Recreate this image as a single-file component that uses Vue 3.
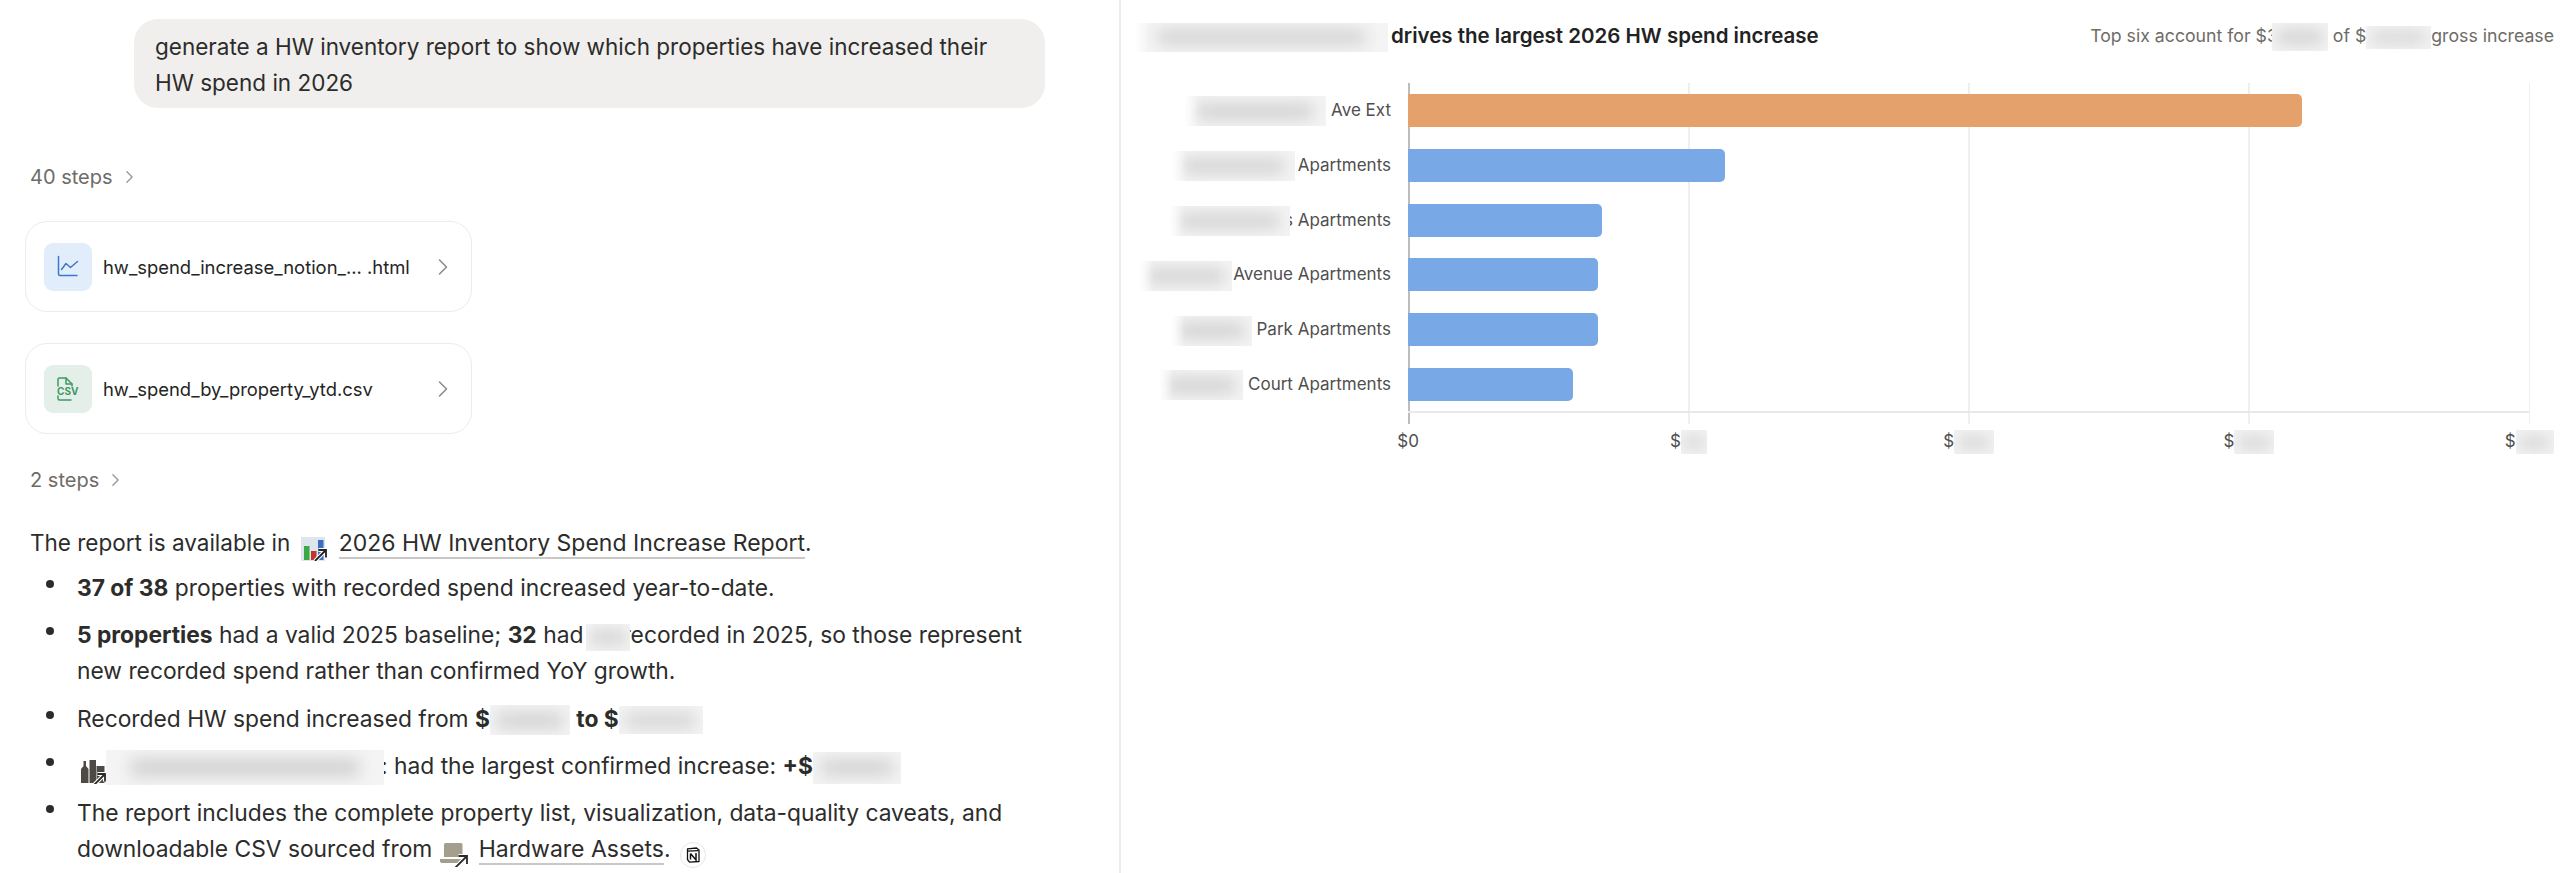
<script setup>
import { computed } from 'vue'

const maxValue = 1121

const rows = [
  { blur: 142, text: 'Ave Ext', gap: 5, bar: 894, color: '#e5a16b' },
  { blur: 123, text: 'Apartments', gap: 3, bar: 317, color: '#78a8e5' },
  { blur: 121, text: 's Apartments', gap: -6, bar: 194, color: '#78a8e5' },
  { blur: 93, text: 'Avenue Apartments', gap: 1, bar: 190, color: '#78a8e5' },
  { blur: 81, text: 'Park Apartments', gap: 5, bar: 190, color: '#78a8e5' },
  { blur: 84, text: 'Court Apartments', gap: 5, bar: 165, color: '#78a8e5' }
]

const gridLines = [0, 1, 2, 3, 4]
const barRows = computed(() => rows.map((r) => ({ ...r, pct: (r.bar / maxValue) * 100 + '%' })))
const tickBlurs = [0, 26, 40, 40, 38]
</script>

<template>
  <div class="page">
    <section class="chat">
      <div class="bubble">generate a HW inventory report to show which properties have increased their HW spend in 2026</div>

      <div class="steps first">
        40 steps
        <svg class="steps-chev" viewBox="0 0 10 16"><path d="M2 2l6 6-6 6" /></svg>
      </div>

      <div class="file first-file">
        <span class="file-icon blue">
          <svg viewBox="0 0 24 24" width="24" height="24" fill="none" stroke="#3f78c9" stroke-width="1.5" stroke-linecap="round" stroke-linejoin="round">
            <path d="M2.5 1.5V19q0 1.5 1.5 1.5h17" />
            <path d="M5.5 14.5L10 8.5l4.500 4 7-6" />
          </svg>
        </span>
        <span class="file-name">hw_spend_increase_notion_... .html</span>
        <svg class="file-chev" viewBox="0 0 12 18"><path d="M2.500 2l7 7-7 7" /></svg>
      </div>

      <div class="file">
        <span class="file-icon green">
          <svg viewBox="0 0 26 26" width="26" height="26" fill="none" stroke="#3d9a62" stroke-width="1.5" stroke-linecap="round" stroke-linejoin="round">
            <path d="M3 10V3.500Q3 2 4.500 2H11l6 6v2" />
            <path d="M11 2v6h6" />
            <path d="M3 20v2.500Q3 24 4.500 24H16" />
            <text x="2" y="19" class="csv-label">CSV</text>
          </svg>
        </span>
        <span class="file-name">hw_spend_by_property_ytd.csv</span>
        <svg class="file-chev" viewBox="0 0 12 18"><path d="M2.500 2l7 7-7 7" /></svg>
      </div>

      <div class="steps second">
        2 steps
        <svg class="steps-chev" viewBox="0 0 10 16"><path d="M2 2l6 6-6 6" /></svg>
      </div>

      <p class="intro">
        The report is available in
        <svg class="page-icon chart-icon" viewBox="0 0 26 24">
          <rect x="0" y="0" width="24" height="24" fill="#dfe5ec" />
          <rect x="3" y="9" width="5.500" height="14" fill="#3aa845" />
          <rect x="10" y="14" width="5.500" height="9" fill="#c2352b" />
          <rect x="17" y="3" width="5.500" height="20" fill="#3a6fc4" />
          <path d="M14 24L25 13M17.500 13H25v7.500" fill="none" stroke="#fff" stroke-width="4" />
          <path d="M14 24L25 13M17.500 13H25v7.500" fill="none" stroke="#222" stroke-width="1.800" />
        </svg>
        <a class="link">2026 HW Inventory Spend Increase Report</a>.
      </p>

      <ul class="summary">
        <li><b>37 of 38</b> properties with recorded spend increased year-to-date.</li>
        <li><b>5 properties</b> had a valid 2025 baseline; <b>32</b> had<span class="redact r-none"></span>recorded in 2025, so those represent new recorded spend rather than confirmed YoY growth.</li>
        <li>Recorded HW spend increased from <b>$</b><span class="redact r-from"></span> <b>to $</b><span class="redact r-to"></span></li>
        <li class="top-row">
          <svg class="page-icon building-icon" viewBox="0 0 26 24">
            <path d="M0 23V9l2.500-3V1h2.500v5l2.500 3v14zM8.500 23V0h6.500v23zM15.500 23V6h8v17z" fill="#4d4a45" />
            <path d="M13 25L24 14M16.500 14H24v7.500" fill="none" stroke="#fff" stroke-width="4" />
            <path d="M13 25L24 14M16.500 14H24v7.500" fill="none" stroke="#2b2a28" stroke-width="1.800" />
          </svg><span class="redact r-name"></span>: had the largest confirmed increase: <b>+$</b><span class="redact r-gain"></span>
        </li>
        <li>
          The report includes the complete property list, visualization, data-quality caveats, and downloadable CSV sourced from
          <svg class="page-icon laptop-icon" viewBox="0 0 30 24">
            <path d="M4 1.500Q4 0 5.500 0H21q1.500 0 1.500 1.500V14H4zM0 16h24v2q0 2-2 2H3q-3 0-3-2z" fill="#a49e8f" />
            <path d="M15 25L27 13M18.500 13H27v8" fill="none" stroke="#fff" stroke-width="4" />
            <path d="M15 25L27 13M18.500 13H27v8" fill="none" stroke="#2b2a28" stroke-width="1.800" />
          </svg>
          <a class="link">Hardware Assets</a>.
          <span class="notion-badge">
            <svg viewBox="0 0 16 16" width="16" height="16">
              <path d="M2.500 1.800L11.500 1l2.500 2v11.500l-9.500.6-2-2.600z" fill="#fff" stroke="#111" stroke-width="1.300" stroke-linejoin="round" />
              <path d="M3 4.200l10.500-.6" stroke="#111" stroke-width="1.300" />
              <path d="M5.500 6.500v6M5.500 6.500l5.500 6.500V6" fill="none" stroke="#111" stroke-width="1.500" />
            </svg>
          </span>
        </li>
      </ul>
    </section>

    <section class="report">
      <header class="report-head">
        <h2 class="report-title"><span class="redact r-title"></span>drives the largest 2026 HW spend increase</h2>
        <p class="report-sub">Top six account for $3<span class="redact r-sub-a"></span>&nbsp;of $<span class="redact r-sub-b"></span>gross increase</p>
      </header>

      <div class="chart">
        <div class="grid-lines">
          <i v-for="n in gridLines" :key="n" class="grid-line" :class="{ axis: n === 0 }"></i>
        </div>
        <div class="bars">
          <div v-for="r in barRows" :key="r.text" class="bar-row">
            <div class="bar-label">
              <span class="redact" :style="{ width: r.blur + 'px', marginRight: r.gap + 'px' }"></span>{{ r.text }}
            </div>
            <div class="bar-track">
              <div class="bar" :style="{ width: r.pct, background: r.color }"></div>
            </div>
          </div>
        </div>
        <div class="ticks">
          <div v-for="(w, i) in tickBlurs" :key="i" class="tick">
            <template v-if="i === 0">$0</template>
            <template v-else>$<span class="redact tick-blur" :style="{ width: w + 'px' }"></span></template>
          </div>
        </div>
      </div>
    </section>
  </div>
</template>

<style scoped>
.page {
  display: flex;
  width: 2560px;
  height: 873px;
  overflow: hidden;
  background: #fff;
  color: #2c2c2b;
  font-family: Inter, "Liberation Sans", sans-serif;
}

.chat {
  width: 1121px;
  flex: none;
  box-sizing: border-box;
  padding: 19px 0 0 25px;
  border-right: 2px solid #ececec;
  font-size: 22.5px;
  line-height: 36px;
}

.bubble {
  box-sizing: border-box;
  width: 911px;
  margin-left: 109px;
  padding: 10px 21px 7px;
  border-radius: 24px;
  background: #f0efed;
}

.steps {
  display: flex;
  align-items: center;
  gap: 12px;
  height: 24px;
  margin-left: 5px;
  color: #6e6c67;
  font-size: 20px;
}

.steps.first {
  margin-top: 57px;
}

.steps.second {
  margin-top: 34px;
}

.steps-chev {
  width: 9px;
  height: 14px;
  fill: none;
  stroke: #9a9892;
  stroke-width: 1.5;
  stroke-linecap: round;
  stroke-linejoin: round;
}

.file {
  display: flex;
  align-items: center;
  box-sizing: border-box;
  width: 447px;
  height: 91px;
  margin-top: 31px;
  padding: 0 22px 0 18px;
  border: 1.5px solid #ececeb;
  border-radius: 22px;
}

.file.first-file {
  margin-top: 32px;
}

.file-icon {
  display: flex;
  flex: none;
  align-items: center;
  justify-content: center;
  width: 48px;
  height: 48px;
  border-radius: 9px;
}

.file-icon.blue {
  background: #e1edfa;
}

.file-icon.green {
  background: #e5efe9;
}

.csv-label {
  fill: #3d9a62;
  stroke: none;
  font-size: 10px;
  font-weight: 700;
  font-family: Inter, sans-serif;
}

.file-name {
  flex: 1;
  margin-left: 11px;
  color: #252524;
  font-size: 18.4px;
  line-height: 24px;
}

.file-chev {
  width: 12px;
  height: 18px;
  fill: none;
  stroke: #8f8c86;
  stroke-width: 1.6;
  stroke-linecap: round;
  stroke-linejoin: round;
}

.intro {
  margin: 33px 0 0 5px;
}

.page-icon {
  display: inline-block;
  height: 24px;
  margin: -6px 12px -6px 4px;
  vertical-align: -4px;
}

.chart-icon {
  width: 26px;
}

.building-icon {
  width: 26px;
  margin: -6px -1px -6px 4px;
}

.laptop-icon {
  width: 30px;
  margin-left: 1px;
  margin-right: 9px;
}

.link {
  border-bottom: 2px solid #c9c8c5;
  color: inherit;
  font-size: 23px;
}

.summary {
  display: flex;
  flex-direction: column;
  gap: 11.3px;
  margin: 9px 0 0;
  padding: 0;
  list-style: none;
  font-size: 22.8px;
}

.summary li {
  position: relative;
  width: 960px;
  padding-left: 52px;
}

.summary li::before {
  content: "";
  position: absolute;
  left: 21px;
  top: 10px;
  width: 8px;
  height: 8px;
  border-radius: 50%;
  background: #2c2c2b;
}

.summary b {
  font-weight: 700;
}

.redact {
  display: inline-block;
  position: relative;
  overflow: hidden;
  height: 30px;
  margin: -8px 0;
  vertical-align: middle;
  background: #f4f4f4;
}

.redact::after {
  content: "";
  position: absolute;
  inset: 26% 9%;
  background: #d0d0d0;
  filter: blur(8px);
}

.bar-label .redact,
.r-title {
  -webkit-mask-image: linear-gradient(to right, transparent, #000 14px);
  mask-image: linear-gradient(to right, transparent, #000 14px);
}

.r-none {
  width: 44px;
  height: 27px;
  margin-left: 3px;
  margin-right: -8px;
}

.r-from {
  width: 80px;
}

.r-to {
  width: 84px;
  height: 28px;
}

.r-name {
  width: 278px;
  height: 35px;
  margin-right: -3px;
}

.r-gain {
  width: 88px;
  height: 32px;
}

.notion-badge {
  display: inline-flex;
  align-items: center;
  justify-content: center;
  box-sizing: border-box;
  width: 26px;
  height: 26px;
  margin: -6px 0 -6px 3px;
  border: 1.500px solid #e6e6e5;
  border-radius: 50%;
  vertical-align: -6px;
}

.report {
  flex: 1;
  min-width: 0;
  padding: 22px 6px 0 14px;
}

.report-head {
  display: flex;
  align-items: center;
  justify-content: space-between;
  height: 28px;
}

.report-title {
  margin: 0;
  color: #222;
  font-size: 20.5px;
  font-weight: 600;
  line-height: 28px;
}

.r-title {
  width: 253px;
  height: 29px;
  margin-right: 3px;
}

.report-sub {
  margin: 0;
  color: #6e6c67;
  font-size: 17.7px;
  line-height: 28px;
}

.r-sub-a {
  width: 56px;
  height: 28px;
  margin-left: -6px;
}

.r-sub-b {
  width: 65px;
  height: 23px;
}

.chart {
  position: relative;
  margin: 33px 0 0 -12px;
}

.grid-lines {
  position: absolute;
  top: 0;
  left: 285px;
  display: flex;
  justify-content: space-between;
  width: 1122px;
  height: 341px;
}

.grid-line {
  width: 1.500px;
  background: #efefee;
}

.grid-line.axis {
  background: #bdbdbb;
}

.bars {
  position: relative;
  display: flex;
  flex-direction: column;
  gap: 21.800px;
  height: 318px;
  padding-top: 11px;
}

.bar-row {
  display: grid;
  grid-template-columns: 285px 1121px;
  align-items: center;
  height: 33px;
}

.bar-label {
  padding-right: 17px;
  color: #4f4f4f;
  font-size: 17px;
  line-height: 33px;
  text-align: right;
  white-space: nowrap;
}

.bar-track {
  height: 100%;
}

.bar {
  height: 100%;
  border-radius: 0 5px 5px 0;
}

.ticks {
  display: flex;
  margin: 2px 0 0 145px;
  padding-top: 15px;
  color: #4f4f4f;
  font-size: 17px;
  line-height: 24px;
}

.bars::after {
  content: "";
  position: absolute;
  left: 285px;
  bottom: -1px;
  width: 1121px;
  height: 2px;
  background: #e9e9e8;
}

.tick {
  width: 280.250px;
  flex: none;
  text-align: center;
  white-space: nowrap;
}

.tick-blur {
  height: 24px;
  margin: -4px 0;
}
</style>

<style>
html,
body {
  margin: 0;
  background: #fff;
}
</style>
